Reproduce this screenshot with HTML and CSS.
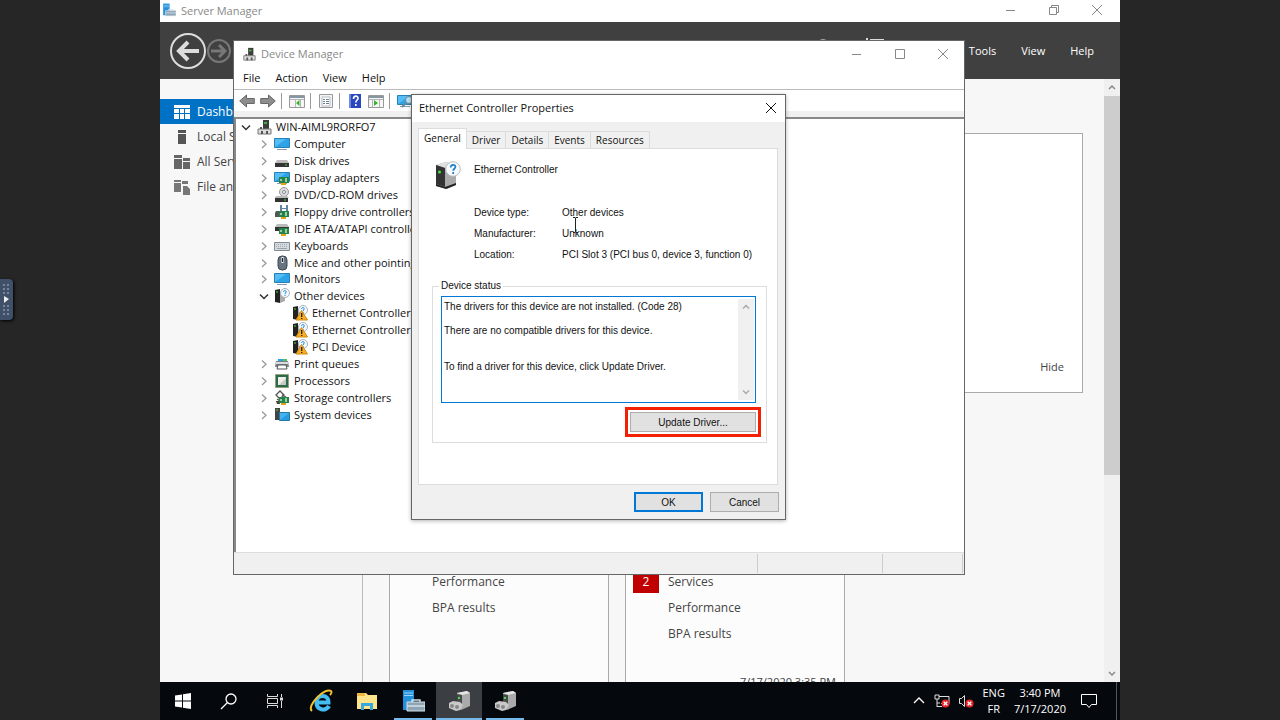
FILE: index.html
```html
<!DOCTYPE html>
<html lang="en">
<head>
    <meta charset="UTF-8">
    <meta name="viewport" content="width=device-width, initial-scale=1.0">
    <title>Server Manager</title>
    <link rel="stylesheet" href="styles.css">
</head>
<body>
    <!-- shared icons -->
    <svg class="sprite" aria-hidden="true">
        <symbol id="min" viewBox="0 0 10 10"><path d="M0 5.500h9" stroke="currentColor"/></symbol>
        <symbol id="max" viewBox="0 0 10 10"><path d="M.5.5h9v9h-9z" fill="none" stroke="currentColor"/></symbol>
        <symbol id="restore" viewBox="0 0 10 10"><path d="M.5 2.500h7v7h-7zM2.500 2.500v-2h7v7h-2" fill="none" stroke="currentColor"/></symbol>
        <symbol id="close" viewBox="0 0 10 10"><path d="M0 0l10 10M10 0L0 10" stroke="currentColor"/></symbol>
        <symbol id="right" viewBox="0 0 12 12"><path d="M4 2.500l4 3.700-4 3.700" fill="none" stroke="#999" stroke-width="1.300"/></symbol>
        <symbol id="open" viewBox="0 0 12 12"><path d="M2 4.500l4 4 4-4" fill="none" stroke="#333" stroke-width="1.500"/></symbol>
        <symbol id="up" viewBox="0 0 10 10"><path d="M2 6.500l3-3 3 3" fill="none" stroke="currentColor" stroke-width="1.500"/></symbol>
        <symbol id="down" viewBox="0 0 10 10"><path d="M2 3.500l3 3 3-3" fill="none" stroke="currentColor" stroke-width="1.500"/></symbol>
        <symbol id="server" viewBox="0 0 24 24"><path d="M2 1h11v20H2z" fill="#2390dc"/><path d="M3 4h9M3 6.500h9" stroke="#9cd4f8"/><path d="M6 13h18v9H6z" fill="#8fa5b5" stroke="#d5e2ec"/><path d="M11 13v-2h8v2M6 17h18" fill="none" stroke="#d5e2ec" stroke-width="1.400"/></symbol>
        <symbol id="devmgr" viewBox="0 0 16 16"><path d="M7 1h6v9H7z" fill="#3c3c3c"/><path d="M8 3h3v2H8z" fill="#3fae49"/><path d="M2 10h13v5H2z" fill="#ddd" stroke="#777"/><path d="M4 8h2v2H4zM5 12h2v3H5zM10 12h2v3h-2z" fill="#555"/></symbol>
        <symbol id="computer" viewBox="0 0 16 16"><path d="M.5 2.500h15v9H.5z" fill="#55bdf5" stroke="#2681b5"/><path d="M1 11L12 3h3v8z" fill="#2fa3e8"/><path d="M3 13.500h10" stroke="#8b9daa"/></symbol>
        <symbol id="disk" viewBox="0 0 16 16"><path d="M3 7h10l2 3H1z" fill="#bbb"/><path d="M1 10h14v4H1z" fill="#333"/><path d="M11 12h2" stroke="#4ed655"/></symbol>
        <symbol id="card" viewBox="0 0 16 16"><path d="M5 7h10v6H5z" fill="#23834b"/><path d="M6 9h2v2H6zM11 8h2v4h-2z" fill="#9bd09e"/><path d="M7 14h5" stroke="#e2a31c" stroke-width="2"/></symbol>
        <symbol id="display" viewBox="0 0 16 16"><use href="#computer"/><use href="#card"/></symbol>
        <symbol id="dvd" viewBox="0 0 16 16"><circle cx="10" cy="5" r="4.500" fill="#ddd" stroke="#999"/><circle cx="10" cy="5" r="1.500" fill="#fff" stroke="#888"/><path d="M2 9h11l2 2H1z" fill="#bbb"/><path d="M1 11h13v4H1z" fill="#333"/><path d="M10 13h2" stroke="#4ed655"/></symbol>
        <symbol id="floppy" viewBox="0 0 16 16"><path d="M6 1h8v7H6z" fill="#5f86a5"/><path d="M8 1h4v3H8zM8 5h4v3H8z" fill="#fff"/><path d="M2 7h5l1 6H1V9z" fill="#555"/><use href="#card"/></symbol>
        <symbol id="ide" viewBox="0 0 16 16"><path d="M3 3h10l2 3H1z" fill="#bbb"/><path d="M1 6h14v4H1z" fill="#333"/><use href="#card"/></symbol>
        <symbol id="keyboard" viewBox="0 0 16 16"><path d="M.5 4.500h15v8H.5z" fill="#d4dae0" stroke="#808a92"/><path d="M2 6.500h12M2 8.500h12" stroke="#a0a9b0" stroke-dasharray="1 1"/><path d="M3 10.500h10" stroke="#98a2aa"/></symbol>
        <symbol id="mouse" viewBox="0 0 16 16"><rect x="4" y="1" width="9" height="14" rx="4" fill="#667482" stroke="#3d4853"/><path d="M8.500 2v6" stroke="#fff" stroke-width="2"/><path d="M8.500 3v4" stroke="#222"/></symbol>
        <symbol id="unknown" viewBox="0 0 16 16"><path d="M1 2l5-1v14l-5-1z" fill="#222"/><path d="M6 4h5v9l-5 2z" fill="#aaa"/><path d="M2 4h2" stroke="#45d84b"/><circle cx="11" cy="5" r="4.500" fill="#f5f8fb" stroke="#aab1b7"/><path d="M9.500 3.800c.3-1.800 3-1.500 2.700.2-.2.900-1.200 1-1.200 2.200M11 7v1" fill="none" stroke="#1685d6"/></symbol>
        <symbol id="warn" viewBox="0 0 16 16"><use href="#unknown"/><path d="M9.500 5.500L15.500 15H4z" fill="#f6ae25" stroke="#d48a0c"/><path d="M9.700 8v4M9.700 13v1" stroke="#222" stroke-width="1.300"/></symbol>
        <symbol id="printer" viewBox="0 0 16 16"><path d="M4 3h9v4H4z" fill="#2ba4e4"/><path d="M9 3h4v3H9z" fill="#58bd55"/><path d="M2 5h12l1 6H1z" fill="#7a8186"/><path d="M2 6h12v2H2z" fill="#d8dcdf"/><path d="M4 9h8l1 4H3z" fill="#fff" stroke="#555"/></symbol>
        <symbol id="cpu" viewBox="0 0 16 16"><path d="M1.500 1.500h13v13h-13z" fill="#2a6b4b" stroke="#8f8f49" stroke-dasharray="1 1"/><path d="M4 4h8v8H4z" fill="#f0f0e8"/><path d="M12 5v7H5z" fill="#cacac0"/></symbol>
        <symbol id="storage" viewBox="0 0 16 16"><path d="M2 5l4-4 4 4-4 4zM3 9l3 2M8 5l4 2" fill="none" stroke="#555" stroke-width="1.300"/><path d="M2 11h4v3H3z" fill="#444"/><use href="#card"/></symbol>
        <symbol id="system" viewBox="0 0 16 16"><path d="M1 1h5v12H1z" fill="#444"/><path d="M2 3h2" stroke="#4ed655"/><path d="M5.500 5.500h10v8h-10z" fill="#43b2ef" stroke="#2376a7"/><path d="M6 13l9-7v7z" fill="#249be2"/></symbol>
        <symbol id="hardware" viewBox="0 0 24 24"><path d="M10 4l10-2 3 2v13l-9 4-4-3z" fill="#aaa"/><path d="M10 4l10-2 3 2-8 2z" fill="#e5e5e5"/><path d="M10 5l5 1v9l-5-2z" fill="#454a48"/><path d="M12 8v2" stroke="#4ed655" stroke-width="2"/><path d="M2 14l4-2 7 1 3 3-3 5-4 1-7-3z" fill="#c9c9c9"/><circle cx="5" cy="17" r="2" fill="#888"/><circle cx="10" cy="18" r="2" fill="#888"/></symbol>
        <symbol id="panel-l" viewBox="0 0 16 16"><path d="M.5 2.500h15v12H.5z" fill="#f6f6f6" stroke="#999"/><path d="M1 4h14" stroke="#8796a3" stroke-width="2"/><path d="M6.500 6v8M11.500 6v8M1 6.500h14" stroke="#b5b5b5"/><path d="M10.500 7v6L7 10z" fill="#33b52c"/></symbol>
        <symbol id="panel-r" viewBox="0 0 16 16"><path d="M.5 2.500h15v12H.5z" fill="#f6f6f6" stroke="#999"/><path d="M1 4h14" stroke="#8796a3" stroke-width="2"/><path d="M4.500 6v8M11.500 6v8M1 6.500h14" stroke="#b5b5b5"/><path d="M6 7v6l4-3z" fill="#33b52c"/></symbol>
        <symbol id="props" viewBox="0 0 16 16"><path d="M1.500 1.500h13v13h-13z" fill="#f4f4f4" stroke="#999"/><path d="M4 4h8v9H4z" fill="#fff" stroke="#b5bdc4"/><path d="M5 6.500h2M8 6.500h3M5 8.500h2M8 8.500h3M5 10.500h2M8 10.500h3" stroke="#6e8192"/></symbol>
        <symbol id="arrow-l" viewBox="0 0 16 16"><path d="M.7 8l6.800-6v3.500h7.800v5H7.500V14z" fill="#8d8d8d" stroke="#686868"/></symbol>
        <symbol id="help" viewBox="0 0 16 16"><path d="M2 1h12v14H2z" fill="#2948bd"/><path d="M2 1h2v14H2z" fill="#6f88df"/><path d="M6.500 6c0-4 5-3.500 4.500-.5-.3 1.500-2.200 1.700-2.200 4M8.800 11v2" fill="none" stroke="#fff" stroke-width="1.600"/></symbol>
        <symbol id="scan" viewBox="0 0 16 16"><use href="#computer"/><circle cx="12" cy="7" r="3.500" fill="#b8e4fb" stroke="#6d8797"/><path d="M9 10l-4 4" stroke="#6d8797" stroke-width="2"/></symbol>
        <symbol id="redx" viewBox="0 0 10 10"><circle cx="5" cy="5" r="4.500" fill="#e5252b"/><path d="M3 3l4 4M7 3L3 7" stroke="#fff" stroke-width="1.400"/></symbol>
    </svg>

    <button class="handle" aria-label="Open control bar">
        <svg width="13" height="41" viewBox="0 0 13 41"><path d="M4 5v10M8 5v10M4 26v10M8 26v10" stroke="#75859a" stroke-width="2" stroke-dasharray="2 2"/><path d="M4 17l5 3-5 4z" fill="#eee"/></svg>
    </button>

    <div class="screen">
        <div class="server-manager">
            <div class="titlebar">
                <svg class="icon"><use href="#server"/></svg>
                <span class="title">Server Manager</span>
                <button aria-label="Minimize"><svg><use href="#min"/></svg></button>
                <button aria-label="Restore"><svg><use href="#restore"/></svg></button>
                <button aria-label="Close"><svg><use href="#close"/></svg></button>
            </div>
            <div class="banner">
                <button aria-label="Back"><svg width="36" height="36" viewBox="0 0 36 36" fill="none" stroke="#ddd"><circle cx="18" cy="18" r="17" stroke-width="2"/><path d="M29 18H9M18 9l-9 9 9 9" stroke-width="4"/></svg></button>
                <button aria-label="Forward"><svg width="26" height="26" viewBox="0 0 26 26" fill="none" stroke="#777"><circle cx="13" cy="13" r="11" stroke-width="2"/><path d="M5 13h14M13 7l6 6-6 6" stroke-width="3"/></svg></button>
                <nav>
                    <button class="refresh" aria-label="Refresh"><svg width="14" height="26" viewBox="0 0 14 26"><circle cx="7" cy="7" r="5" fill="none" stroke="#aaa" stroke-width="2"/></svg></button>
                    <button class="flag" aria-label="Notifications"><svg width="18" height="26" viewBox="0 0 18 26"><path d="M1 0v20M4 2h13v10H4" fill="none" stroke="#ddd" stroke-width="2"/></svg></button>
                    <button>Tools</button>
                    <button>View</button>
                    <button>Help</button>
                </nav>
            </div>
            <div class="content">
                <ul class="sidebar">
                    <li class="active"><svg viewBox="0 0 16 16"><path d="M0 1h16v3H0zM0 5h5v4H0zM6 5h4v4H6zM11 5h5v4h-5zM0 10h5v5H0zM6 10h4v5H6zM11 10h5v5h-5z" fill="#fff"/></svg>Dashboard</li>
                    <li><svg viewBox="0 0 16 16"><path d="M4 1h8v3H4zM4 5h8v10H4z" fill="#555"/></svg>Local Server</li>
                    <li><svg viewBox="0 0 16 16"><path d="M0 1h8v3H0zM0 5h8v10H0zM9 4h7v3H9zM9 8h7v7H9z" fill="#666"/></svg>All Servers</li>
                    <li><svg viewBox="0 0 16 16"><path d="M0 1h7v2H0zM0 4h7v9H0zM8 2h6v3H8zM9 7h4l3 3v6H9z" fill="#777"/></svg>File and Storage Services</li>
                </ul>
                <main>
                    <div class="welcome"><button>Hide</button></div>
                    <div class="tiles">
                        <div class="tile">
                            <ul>
                                <li>Manageability</li>
                                <li>Events</li>
                                <li>Performance</li>
                                <li>BPA results</li>
                            </ul>
                        </div>
                        <div class="tile">
                            <ul>
                                <li>Manageability</li>
                                <li>Events</li>
                                <li><span class="count">2</span>Services</li>
                                <li>Performance</li>
                                <li>BPA results</li>
                            </ul>
                            <p>7/17/2020 3:35 PM</p>
                        </div>
                    </div>
                </main>
                <div class="scrollbar">
                    <svg><use href="#up"/></svg>
                    <div class="thumb"></div>
                    <svg><use href="#down"/></svg>
                </div>
            </div>
        </div>

        <div class="taskbar">
            <button aria-label="Start"><svg width="16" height="16" viewBox="0 0 16 16"><path d="M0 2.500L7 1.500v6H0zM8 1.300L16 0v7.500H8zM0 8.500h7v6l-7-1zM8 8.500h8V16l-8-1.200z" fill="#fff"/></svg></button>
            <button aria-label="Search"><svg width="18" height="18" viewBox="0 0 18 18"><circle cx="11" cy="7" r="5" fill="none" stroke="#fff" stroke-width="1.300"/><path d="M7.500 10.500L1 17" stroke="#fff" stroke-width="1.300"/></svg></button>
            <button aria-label="Task view"><svg width="16" height="16" viewBox="0 0 16 16" fill="none" stroke="#ddd"><path d="M.5 1v2.500h10V1M.5 5.500h10v5H.5zM.5 15v-2.500h10V15M14.500 1v3M14.500 8v7"/><path d="M13 6h3" stroke-width="3"/></svg></button>
            <button aria-label="Internet Explorer"><svg width="24" height="24" viewBox="0 0 24 24" fill="none"><path d="M20 17c-3 6-13 4-12.500-4S20 5 19.500 13.500H8" stroke="#45bdf2" stroke-width="4"/><path d="M3 22C-3 17 16-2 22 2c1 1 0 3-1 4" stroke="#f3c32c" stroke-width="2"/></svg></button>
            <button aria-label="File Explorer"><svg width="22" height="20" viewBox="0 0 22 20"><path d="M1 2h9l2 2h9v14H1z" fill="#ffe48c"/><path d="M1 2h8v3H1z" fill="#efb83f"/><path d="M5 19v-7h12v7h-3v-4H8v4z" fill="#37a9df"/></svg></button>
            <button class="running" aria-label="Server Manager"><svg><use href="#server"/></svg></button>
            <button class="running current" aria-label="Device Manager"><svg><use href="#hardware"/></svg></button>
            <button class="running" aria-label="Device properties"><svg><use href="#hardware"/></svg></button>
            <div class="tray">
                <svg width="14" height="16" viewBox="0 0 14 16"><path d="M2 10l5-5 5 5" fill="none" stroke="#fff" stroke-width="1.300"/></svg>
                <svg width="16" height="16" viewBox="0 0 16 16"><path d="M5 3.500h10v7H7M1 2h4v4H1zM3 6v8M3 10h3M3 13.500h5" fill="none" stroke="#ddd"/><use href="#redx" x="7" y="6" width="9" height="9"/></svg>
                <svg width="16" height="16" viewBox="0 0 16 16"><path d="M1.500 5.500h2l3-3v11l-3-3h-2z" fill="none" stroke="#ddd"/><use href="#redx" x="7" y="6" width="9" height="9"/></svg>
                <p>ENG<br>FR</p>
                <p>3:40 PM<br>7/17/2020</p>
                <svg width="16" height="16" viewBox="0 0 16 16"><path d="M.5 1.500h15v10h-5L8 14.500l-2.500-3h-5z" fill="none" stroke="#fff"/></svg>
            </div>
        </div>

        <div class="device-manager">
            <div class="titlebar">
                <svg class="icon"><use href="#devmgr"/></svg>
                <span class="title">Device Manager</span>
                <button aria-label="Minimize"><svg><use href="#min"/></svg></button>
                <button aria-label="Maximize"><svg><use href="#max"/></svg></button>
                <button aria-label="Close"><svg><use href="#close"/></svg></button>
            </div>
            <div class="menubar">
                <button>File</button>
                <button>Action</button>
                <button>View</button>
                <button>Help</button>
            </div>
            <div class="toolbar">
                <button aria-label="Back"><svg><use href="#arrow-l"/></svg></button>
                <button aria-label="Forward"><svg class="flip"><use href="#arrow-l"/></svg></button>
                <i></i>
                <button aria-label="Show console tree"><svg><use href="#panel-l"/></svg></button>
                <i></i>
                <button aria-label="Properties"><svg><use href="#props"/></svg></button>
                <i></i>
                <button aria-label="Help"><svg><use href="#help"/></svg></button>
                <button aria-label="Show action pane"><svg><use href="#panel-r"/></svg></button>
                <i></i>
                <button aria-label="Scan for hardware changes"><svg><use href="#scan"/></svg></button>
            </div>
            <div class="tree-view">
                <ul class="tree">
                    <li class="root"><svg class="chevron"><use href="#open"/></svg><svg><use href="#devmgr"/></svg>WIN-AIML9RORFO7</li>
                    <li><svg class="chevron"><use href="#right"/></svg><svg><use href="#computer"/></svg>Computer</li>
                    <li><svg class="chevron"><use href="#right"/></svg><svg><use href="#disk"/></svg>Disk drives</li>
                    <li><svg class="chevron"><use href="#right"/></svg><svg><use href="#display"/></svg>Display adapters</li>
                    <li><svg class="chevron"><use href="#right"/></svg><svg><use href="#dvd"/></svg>DVD/CD-ROM drives</li>
                    <li><svg class="chevron"><use href="#right"/></svg><svg><use href="#floppy"/></svg>Floppy drive controllers</li>
                    <li><svg class="chevron"><use href="#right"/></svg><svg><use href="#ide"/></svg>IDE ATA/ATAPI controllers</li>
                    <li><svg class="chevron"><use href="#right"/></svg><svg><use href="#keyboard"/></svg>Keyboards</li>
                    <li><svg class="chevron"><use href="#right"/></svg><svg><use href="#mouse"/></svg>Mice and other pointing devices</li>
                    <li><svg class="chevron"><use href="#right"/></svg><svg><use href="#computer"/></svg>Monitors</li>
                    <li><svg class="chevron"><use href="#open"/></svg><svg><use href="#unknown"/></svg>Other devices</li>
                    <li class="child"><svg><use href="#warn"/></svg>Ethernet Controller</li>
                    <li class="child"><svg><use href="#warn"/></svg>Ethernet Controller</li>
                    <li class="child"><svg><use href="#warn"/></svg>PCI Device</li>
                    <li><svg class="chevron"><use href="#right"/></svg><svg><use href="#printer"/></svg>Print queues</li>
                    <li><svg class="chevron"><use href="#right"/></svg><svg><use href="#cpu"/></svg>Processors</li>
                    <li><svg class="chevron"><use href="#right"/></svg><svg><use href="#storage"/></svg>Storage controllers</li>
                    <li><svg class="chevron"><use href="#right"/></svg><svg><use href="#system"/></svg>System devices</li>
                </ul>
            </div>
            <div class="statusbar"><span></span><span></span><span></span></div>
        </div>

        <form class="dialog">
            <div class="titlebar">
                <span class="title">Ethernet Controller Properties</span>
                <button type="button" aria-label="Close"><svg><use href="#close"/></svg></button>
            </div>
            <div class="tabs">
                <button type="button" class="selected">General</button>
                <button type="button">Driver</button>
                <button type="button">Details</button>
                <button type="button">Events</button>
                <button type="button">Resources</button>
            </div>
            <div class="panel">
                <div class="device">
                    <svg width="26" height="28" viewBox="0 0 26 28"><path d="M1 4l10-3 10 3v20l-9 4-11-3z" fill="#aaa"/><path d="M1 4l10-3 10 3-10 3z" fill="#e0e0e0"/><path d="M1 4l9 3v19l-9-3z" fill="#333"/><path d="M1 23l9 3 11-4v2l-10 4-10-3z" fill="#222"/><circle cx="4.500" cy="11" r="1.500" fill="#3dea45"/><circle cx="18" cy="8" r="7.300" fill="#f8fafc" stroke="#b8bcc0"/><path d="M15.700 6.500c0-3.500 5-3.500 4.700-.4-.2 1.700-2.200 1.700-2.200 3.700M18.200 11v2" fill="none" stroke="#1880cf" stroke-width="1.700"/></svg>
                    <span>Ethernet Controller</span>
                </div>
                <dl>
                    <dt>Device type:</dt><dd>Other devices</dd>
                    <dt>Manufacturer:</dt><dd>Unknown</dd>
                    <dt>Location:</dt><dd>PCI Slot 3 (PCI bus 0, device 3, function 0)</dd>
                </dl>
                <fieldset>
                    <legend><label for="status">Device status</label></legend>
                    <div class="status-box">
                        <textarea id="status" readonly>The drivers for this device are not installed. (Code 28)

There are no compatible drivers for this device.


To find a driver for this device, click Update Driver.</textarea>
                        <div class="status-scroll">
                            <svg><use href="#up"/></svg>
                            <svg><use href="#down"/></svg>
                        </div>
                    </div>
                    <button type="button" class="update">Update Driver...</button>
                </fieldset>
            </div>
            <div class="actions">
                <button type="button" class="default">OK</button>
                <button type="button">Cancel</button>
            </div>
        </form>

        <svg class="cursor" width="7" height="16" viewBox="0 0 7 16"><path d="M1 .5h2l.5.5.5-.5h2M3.500 1v14M1 15.500h2l.5-.5.5.5h2" fill="none" stroke="#222"/></svg>
    </div>
</body>
</html>
```
FILE: styles.css
```css
* {
    box-sizing: border-box;
}
body {
    margin: 0;
    height: 100vh;
    display: flex;
    justify-content: center;
    background: #262626;
    color: #111;
    font-family: "Open Sans", "Noto Sans", sans-serif;
    font-size: 11px;
    overflow: hidden;
}
button {
    border: 0;
    padding: 0;
    background: none;
    color: inherit;
    font: inherit;
}
ul, p, dl, dd {
    margin: 0;
    padding: 0;
    list-style: none;
}
svg {
    display: block;
    flex: none;
}
.sprite {
    position: absolute;
    width: 0;
    height: 0;
}
.handle {
    position: absolute;
    left: 0;
    top: 279px;
    background: #3f5068;
    border-radius: 0 4px 4px 0;
    box-shadow: 1px 1px 3px #000;
}
.screen {
    position: relative;
    height: 100vh;
    aspect-ratio: 4 / 3;
    display: flex;
    flex-direction: column;
    overflow: hidden;
}

/* title bars */
.titlebar {
    display: flex;
    align-items: center;
    flex: none;
    background: #fff;
    color: #888;
}
.titlebar .title {
    flex: 1;
}
.titlebar .icon {
    width: 14px;
    height: 14px;
    margin-right: 5px;
}
.titlebar button {
    width: 43px;
    display: flex;
    justify-content: center;
}
.titlebar button svg {
    width: 10px;
    height: 10px;
}

/* server manager */
.server-manager {
    flex: 1;
    min-height: 0;
    display: flex;
    flex-direction: column;
    background: #f7f7f7;
}
.server-manager > .titlebar {
    height: 22px;
    padding: 0 2px 2px;
}
.banner {
    flex: none;
    height: 57px;
    padding: 0 26px 0 10px;
    display: flex;
    align-items: center;
    background: #404040;
    color: #fff;
}
.banner nav {
    display: flex;
    align-items: center;
    gap: 25px;
    margin-left: auto;
}
.banner .refresh {
    margin-right: 11px;
}
.banner .flag {
    margin-right: 60px;
}
.content {
    flex: 1;
    min-height: 0;
    display: flex;
}
.sidebar {
    flex: none;
    width: 203px;
    padding-top: 20px;
    border-right: 1px solid #bbb;
    display: grid;
    align-content: start;
    grid-auto-rows: 25px;
    color: #444;
    font-size: 12px;
}
.sidebar li {
    display: flex;
    align-items: center;
    gap: 7px;
    padding-left: 14px;
    white-space: nowrap;
}
.sidebar svg {
    width: 16px;
    height: 16px;
}
.sidebar .active {
    background: #0072c6;
    color: #fff;
}
main {
    flex: 1;
    padding: 54px 21px 0 26px;
    overflow: hidden;
}
.welcome {
    height: 260px;
    padding: 0 18px 18px;
    display: flex;
    justify-content: flex-end;
    align-items: flex-end;
    background: #fff;
    border: 1px solid #aaa;
    color: #444;
}
.tiles {
    display: flex;
    gap: 16px;
    margin-top: 86px;
}
.tile {
    width: 220px;
    height: 240px;
    padding: 37px 8px 0;
    background: #fcfcfc;
    border: 1px solid #aaa;
    color: #444;
    font-size: 12px;
}
.tile li {
    position: relative;
    height: 26px;
    padding-left: 34px;
    line-height: 26px;
}
.tile .count {
    position: absolute;
    left: -1px;
    top: 2px;
    width: 26px;
    height: 22px;
    line-height: 22px;
    background: #c00000;
    color: #fff;
    text-align: center;
}
.tile p {
    padding-top: 26px;
    font-size: 11px;
    line-height: 18px;
    text-align: right;
}
.scrollbar {
    width: 16px;
    display: flex;
    flex-direction: column;
    align-items: center;
    background: #f0f0f0;
    color: #888;
}
.scrollbar svg {
    width: 10px;
    height: 17px;
}
.scrollbar .thumb {
    width: 100%;
    height: 379px;
    margin-bottom: auto;
    background: #cdcdcd;
}

/* taskbar */
.taskbar {
    flex: none;
    height: 38px;
    display: flex;
    background: #05080d;
    color: #fff;
}
.taskbar button {
    width: 46px;
    display: flex;
    align-items: center;
    justify-content: center;
}
.taskbar .running svg {
    width: 24px;
    height: 24px;
}
.taskbar .running {
    background: linear-gradient(#76b9ed, #76b9ed) center bottom / 38px 2px no-repeat;
}
.taskbar .current {
    background-color: #3b3e42;
    background-size: 46px 2px;
}
.tray {
    display: flex;
    align-items: center;
    gap: 8px;
    margin: 0 3px 0 auto;
    padding-right: 19px;
    border-right: 1px solid #555;
    line-height: 16px;
    text-align: center;
}
.tray p + p {
    margin: 0 7px 0 1px;
}

/* device manager */
.device-manager {
    position: absolute;
    left: 73px;
    right: 155px;
    top: 40px;
    bottom: 145px;
    display: flex;
    flex-direction: column;
    background: #fff;
    border: 1px solid #666;
}
.device-manager > .titlebar {
    height: 27px;
    padding: 0 0 2px 8px;
}
.menubar {
    display: flex;
    gap: 15px;
    height: 22px;
    padding: 0 9px 2px;
    border-bottom: 1px solid #bbb;
}
.toolbar {
    display: flex;
    align-items: center;
    gap: 5px;
    height: 27px;
    padding: 0 5px;
    border-bottom: 6px solid #f0f0f0;
}
.toolbar svg {
    width: 16px;
    height: 16px;
}
.toolbar i {
    width: 1px;
    height: 16px;
    margin-right: 2px;
    background: #999;
}
.flip {
    transform: scaleX(-1);
}
.tree-view {
    flex: 1;
    min-height: 0;
    border: solid #888;
    border-width: 2px 0 0 2px;
}
.tree {
    height: 304px;
    display: grid;
    grid-auto-rows: 1fr;
}
.tree li {
    display: flex;
    align-items: center;
    gap: 4px;
    padding-left: 22px;
    line-height: 16px;
}
.tree .root {
    padding-left: 4px;
}
.tree .child {
    padding-left: 56px;
}
.tree svg {
    width: 16px;
    height: 16px;
}
.tree .chevron {
    width: 12px;
    height: 12px;
}
.statusbar {
    display: flex;
    height: 22px;
    padding: 1px 1px 1px 0;
    background: #f0f0f0;
    border-top: 1px solid #ddd;
}
.statusbar span {
    width: 125px;
    border-right: 1px solid #ccc;
}
.statusbar span:first-child {
    flex: 1;
}
.statusbar span:last-child {
    width: 80px;
}

/* properties dialog */
.dialog {
    position: absolute;
    left: 251px;
    top: 94px;
    width: 375px;
    background: #f0f0f0;
    border: 1px solid #666;
    box-shadow: 0 1px 4px rgba(0, 0, 0, 0.3);
}
.dialog > .titlebar {
    height: 27px;
    padding: 0 0 2px 7px;
    color: #111;
}
.dialog .titlebar button {
    width: 29px;
}
.tabs {
    display: flex;
    align-items: flex-end;
    padding: 6px 6px 0;
    font-size: 10px;
}
.tabs button {
    height: 17px;
    padding: 0 5px;
    border: 1px solid #dcdcdc;
    border-bottom: 0;
    border-left: 0;
    line-height: 16px;
}
.tabs .selected {
    height: 21px;
    margin-bottom: -1px;
    padding-bottom: 2px;
    border-left: 1px solid #dcdcdc;
    background: #fff;
    z-index: 1;
}
.panel {
    height: 337px;
    margin: 0 7px 0 6px;
    padding: 12px 10px 0 13px;
    background: #fff;
    border: 1px solid #dcdcdc;
    font-family: "Liberation Sans", Arial, sans-serif;
    font-size: 10px;
}
.device {
    display: flex;
    gap: 13px;
    padding-left: 3px;
}
.device span {
    padding-top: 3px;
}
dl {
    display: grid;
    grid-template-columns: 88px 1fr;
    grid-auto-rows: 21px;
    align-items: center;
    margin: 13px 0 15px 42px;
}
fieldset {
    margin: 0;
    padding: 4px 10px 10px 8px;
    border: 1px solid #dcdcdc;
}
legend {
    padding: 0 2px;
    margin-left: -2px;
    line-height: 12px;
}
.status-box {
    display: flex;
    height: 107px;
    padding: 2px 1px;
    border: 1px solid #0078d7;
}
textarea {
    flex: 1;
    min-width: 0;
    padding: 2px 1px;
    border: 0;
    outline: 0;
    resize: none;
    overflow: hidden;
    background: none;
    color: inherit;
    font: inherit;
    line-height: 12px;
}
.status-scroll {
    width: 16px;
    padding: 3px;
    display: flex;
    flex-direction: column;
    justify-content: space-between;
    background: #f0f0f0;
    color: #aaa;
}
.status-scroll svg {
    width: 10px;
    height: 10px;
}
.update, .actions button {
    height: 20px;
    background: #e1e1e1;
    border: 1px solid #adadad;
}
.update {
    display: block;
    width: 126px;
    margin: 9px 0 0 auto;
    outline: 3px solid #f42003;
    outline-offset: 2px;
}
.actions {
    display: flex;
    justify-content: flex-end;
    gap: 7px;
    padding: 7px 6px;
    font-family: "Liberation Sans", Arial, sans-serif;
    font-size: 10px;
}
.actions button {
    width: 69px;
}
.actions .default {
    border: 2px solid #0078d7;
}
.cursor {
    position: absolute;
    left: 412px;
    top: 217px;
}
```
